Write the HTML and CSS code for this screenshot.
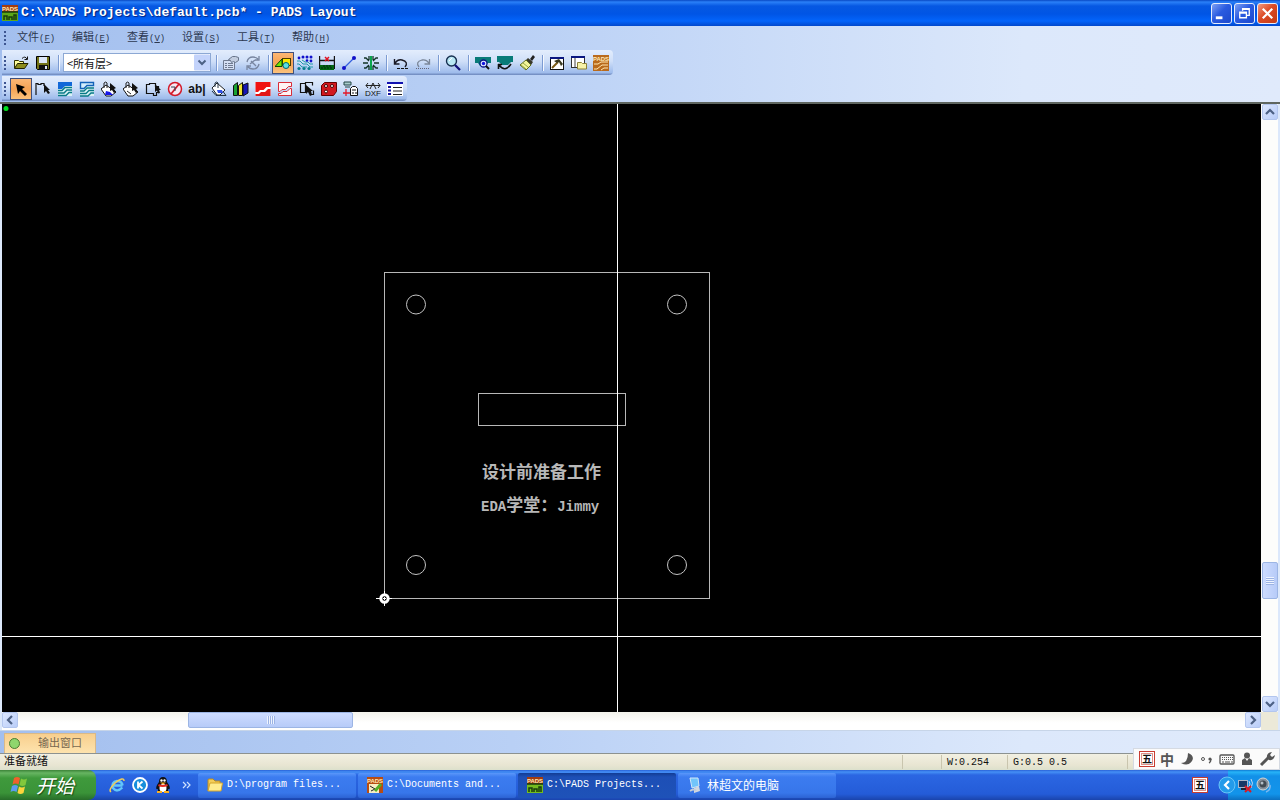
FILE: index.html
```html
<!DOCTYPE html>
<html lang="zh-CN">
<head>
<meta charset="utf-8">
<title>PADS Layout</title>
<link rel="stylesheet" href="styles.css">
</head>
<body>
<header class="titlebar">
  <svg class="icon" viewBox="0 0 16 16"><rect width="16" height="16" fill="#a33c10"/><rect y="7" width="16" height="9" fill="#5ca818"/><path d="M0 7h16M2 15v-4h3v4M7 15v-3h3v3M12 15v-5h2v5" stroke="#173d0c" stroke-width="1.500" fill="none"/><text class="logo-text" x="8" y="6">PADS</text></svg>
  <h1 class="caption">C:\PADS Projects\default.pcb* - PADS Layout</h1>
  <div class="window-buttons">
    <button class="win" aria-label="最小化"><svg viewBox="0 0 20 20"><rect x="4" y="13" width="7" height="3" fill="#fff"/></svg></button>
    <button class="win" aria-label="还原"><svg viewBox="0 0 20 20"><path d="M8 7V5h7v7h-3M8 5.500h7" fill="none" stroke="#fff" stroke-width="1.400"/><path d="M5 8.500h7v6H5zM5 9.500h7" fill="none" stroke="#fff" stroke-width="1.400"/></svg></button>
    <button class="win win-close" aria-label="关闭"><svg viewBox="0 0 20 20"><path d="M5 5l10 10M15 5L5 15" stroke="#fff" stroke-width="2.300"/></svg></button>
  </div>
</header>

<div class="chrome">
  <nav class="menubar">
    <span class="grip"></span>
    <button class="menu">文件<span class="key">(<u>F</u>)</span></button>
    <button class="menu">编辑<span class="key">(<u>E</u>)</span></button>
    <button class="menu">查看<span class="key">(<u>V</u>)</span></button>
    <button class="menu">设置<span class="key">(<u>S</u>)</span></button>
    <button class="menu">工具<span class="key">(<u>T</u>)</span></button>
    <button class="menu">帮助<span class="key">(<u>H</u>)</span></button>
  </nav>

  <div class="toolbar" role="toolbar" aria-label="标准">
    <span class="grip"></span>
    <button class="tool" aria-label="打开"><svg class="icon" viewBox="0 0 16 16"><path d="M1.500 13V5.500h4l1 1h4v2" fill="#ffff9c" stroke="#333300"/><path d="M1.500 13.500l3-5h10.500l-3.500 5z" fill="#8c8c1c" stroke="#222200"/><path d="M9 3.500q3-3 5 .5M14.500 1.500v3h-3" fill="none" stroke="#111"/></svg></button>
    <button class="tool" aria-label="保存"><svg class="icon" viewBox="0 0 16 16"><path d="M1.500 1.500h13v13h-12l-1-1z" fill="#737318" stroke="#000"/><rect x="4" y="2" width="8" height="6" fill="#dce6f8"/><rect x="4" y="10" width="9" height="5" fill="#111"/><rect x="10" y="11" width="2" height="3" fill="#dce6f8"/></svg></button>
    <span class="sep"></span>
    <label class="layer"><select class="layer-select" aria-label="层"><option>&lt;所有层&gt;</option></select><svg class="layer-arrow" viewBox="0 0 16 16"><rect width="16" height="16" rx="1" fill="#c3d3fb"/><path d="M4.500 6L8 9.500 11.500 6" fill="none" stroke="#4d6185" stroke-width="2"/></svg></label>
    <span class="sep"></span>
    <button class="tool" aria-label="特性"><svg class="icon" viewBox="0 0 16 16"><path d="M.5 5.500h11v9H.5z" fill="#d5e0f4" stroke="#707b91"/><path d="M2 8.500h2M5 8.500h5M2 10.500h2M5 10.500h5M2 12.500h2M5 12.500h5" stroke="#707b91"/><path d="M5.500 4.500l4-3h3l3 1v3l-3 2-2-1-2 1-1-2z" fill="#c2cde0" stroke="#68758b"/></svg></button>
    <button class="tool" aria-label="循环"><svg class="icon" viewBox="0 0 16 16"><path d="M2 7q1-5 6-5 3 0 5 2M14 1v4h-4M14 9q-1 5-6 5-3 0-5-2M2 15v-4h4M6 6l5 5M5 9l5-4" fill="none" stroke="#7885a0" stroke-width="1.300"/></svg></button>
    <span class="sep"></span>
    <button class="tool is-active" aria-label="绘图"><svg class="icon" viewBox="0 0 16 16"><rect x="7.500" y="3.500" width="8" height="7" fill="#ffe600" stroke="#4d3c00"/><path d="M0 11.500L7 4v7.500z" fill="#6fe800" stroke="#064800"/><circle cx="11" cy="10.500" r="3" fill="#5ce0e6" stroke="#006a70"/></svg></button>
    <button class="tool" aria-label="设计"><svg class="icon" viewBox="0 0 16 16"><path d="M0 6h3l3 3h4l3 3h3M0 9h2l3 3h5M5 5l3 2h3l2 2h3" fill="none" stroke="#209aaa"/><g fill="#1010cc"><circle cx="2" cy="3" r="1.400"/><circle cx="6" cy="2" r="1.500"/><circle cx="10" cy="2" r="1.500"/><circle cx="14" cy="2" r="1.500"/><circle cx="10" cy="5.500" r="1.300"/><circle cx="14" cy="6" r="1.400"/></g><g fill="#087c8c"><circle cx="2" cy="13.500" r="1.600"/><circle cx="7" cy="13.500" r="1.600"/><circle cx="12" cy="13.500" r="1.600"/></g></svg></button>
    <button class="tool" aria-label="尺寸"><svg class="icon" viewBox="0 0 16 16"><path d="M.5 1v13M15.500 1v13M1 5.500h14" stroke="#111" stroke-width="1.400"/><path d="M6 2l4 4M10 2L6 6" stroke="#e01020" stroke-width="1.500"/><rect x="1" y="10" width="14" height="5" fill="#061"/><path d="M2 13h12M4 11h8" stroke="#021" stroke-dasharray="2 1"/></svg></button>
    <button class="tool" aria-label="布线"><svg class="icon" viewBox="0 0 16 16"><path d="M3 13L13 3" stroke="#3560df" stroke-width="1.300"/><circle cx="3" cy="13" r="2" fill="#1010c8"/><circle cx="13" cy="3" r="2" fill="#1010c8"/></svg></button>
    <button class="tool" aria-label="ECO"><svg class="icon" viewBox="0 0 16 16"><path d="M1 3h2l3 3M0 8h5M1 13h2l3-3M15 3h-2l-3 3M16 8h-5M15 13h-2l-3-3M6 1v4M10 1v4M6 11v4M10 11v4" fill="none" stroke="#123326" stroke-width="1.300"/><path d="M8 1v14" stroke="#09a54d" stroke-width="2"/></svg></button>
    <span class="sep"></span>
    <button class="tool" aria-label="撤消"><svg class="icon" viewBox="0 0 16 16"><path d="M1.500 4v5h5M2 8q3-4 7-3 7 2 3 7" fill="none" stroke="#191925" stroke-width="1.400"/><path d="M4 13.500h11" stroke="#111" stroke-dasharray="3 1"/></svg></button>
    <button class="tool" aria-label="重做"><svg class="icon" viewBox="0 0 16 16"><path d="M14.500 4v5h-5M14 8q-3-4-7-3-7 2-3 7" fill="none" stroke="#7b8799" stroke-width="1.300"/><path d="M1 13.500h14" stroke="#667" stroke-dasharray="1 1"/></svg></button>
    <span class="sep"></span>
    <button class="tool" aria-label="缩放"><svg class="icon" viewBox="0 0 16 16"><circle cx="6.500" cy="6" r="5" fill="#b9e8f5" stroke="#173050" stroke-width="1.400"/><path d="M10 10l5 5" stroke="#10107a" stroke-width="2.300"/><path d="M4 6l3-3" stroke="#fff"/></svg></button>
    <span class="sep"></span>
    <button class="tool" aria-label="板"><svg class="icon" viewBox="0 0 16 16"><path d="M0 2h16v6h-3l-3 3H5L3 8H0z" fill="#087b78"/><circle cx="8.500" cy="8.500" r="3.500" fill="#e5eeff" stroke="#0b1688" stroke-width="1.300"/><circle cx="8.500" cy="8.500" r="1.700" fill="#1414df"/><path d="M11 11l3 3" stroke="#111" stroke-width="2"/></svg></button>
    <button class="tool" aria-label="重画"><svg class="icon" viewBox="0 0 16 16"><path d="M0 1h16v6h-2l-3 3H5L2 7H0z" fill="#087b78"/><path d="M1.500 9v5M1 9.500h4M2 10q6 8 12-1" fill="none" stroke="#111" stroke-width="1.600"/></svg></button>
    <button class="tool" aria-label="刷新"><svg class="icon" viewBox="0 0 16 16"><path d="M11 4l3-4 2 2-3 4z" fill="#222"/><path d="M7 5l2-2 5 4-2 3z" fill="#38382a"/><path d="M7 5l5 5-5 5-6-5z" fill="#f2f49a" stroke="#607020"/><path d="M4 8l5 4M2 10l5 4" stroke="#95a846"/></svg></button>
    <span class="sep"></span>
    <button class="tool" aria-label="输出窗口"><svg class="icon" viewBox="0 0 16 16"><rect x="1.500" y="2.500" width="13" height="12" fill="#fff" stroke="#111"/><path d="M1 3h14" stroke="#0a1680" stroke-width="2"/><path d="M3 13l6-6" stroke="#7b5b16" stroke-width="2"/><path d="M5 6l5-2 4 5-2 2-2-4-2 1z" fill="#383820"/></svg></button>
    <button class="tool" aria-label="项目浏览器"><svg class="icon" viewBox="0 0 16 16"><rect x=".5" y="1.500" width="13" height="11" fill="#fff" stroke="#333"/><path d="M0 2h14" stroke="#0a1680" stroke-width="2"/><path d="M4 3v9" stroke="#444"/><path d="M6.500 14V7.500h4l1 1h4V14z" fill="#f7f2a8" stroke="#8d8238"/></svg></button>
    <button class="tool" aria-label="PADS"><svg class="icon" viewBox="0 0 16 16"><rect width="16" height="16" fill="#b96a1c"/><text class="logo-text" x="8" y="6">PADS</text><path d="M1 9h4l3-2h7M1 14h3l5-4h6M8 15l3-2h4" fill="none" stroke="#ffe7b0"/></svg></button>
  </div>

  <div class="toolbar" role="toolbar" aria-label="绘图">
    <span class="grip"></span>
    <button class="tool is-active" aria-label="选择"><svg class="icon" viewBox="0 0 16 16"><path d="M3 3l9 3-3 2 5 5-2 2-5-5-2 3z" fill="#000"/></svg></button>
    <button class="tool" aria-label="绘图线"><svg class="icon" viewBox="0 0 16 16"><path d="M1 14V2.500h2v1h3v-1h3V5" fill="none" stroke="#111" stroke-width="1.200"/><path d="M9 3l6 6h-2l2 3-2 1-2-3-2 2z" fill="#111"/></svg></button>
    <button class="tool" aria-label="铜箔"><svg class="icon" viewBox="0 0 16 16"><rect x="1" y="1" width="14" height="14" fill="#d9f3f6"/><path d="M1 1h14v4H8L5 8H1z" fill="#1268d8"/><path d="M1 9.500h4l3-3h7M1 12h6l3-3h5M1 14.500h8l3-3h3" fill="none" stroke="#087a86" stroke-width="1.400"/></svg></button>
    <button class="tool" aria-label="铜箔挖空"><svg class="icon" viewBox="0 0 16 16"><rect x="1" y="1" width="14" height="14" fill="#d9f3f6"/><path d="M1.500 1.500h13v3H8l-3 3H1.500z" fill="#d3eefc" stroke="#1262b8" stroke-width="1.400"/><path d="M1 10h4l3-3h7M1 12.500h6l3-3h5M1 15h8l3-3h3" fill="none" stroke="#087a86" stroke-width="1.300"/></svg></button>
    <button class="tool" aria-label="灌铜"><svg class="icon" viewBox="0 0 16 16"><path d="M0 8l5-4 10 7-5 4H5z" fill="#fff" stroke="#111"/><path d="M5 10l4 1 3 3H4z" fill="#1717e8"/><path d="M3 7V2q2-2 3 0v5" fill="none" stroke="#222"/><path d="M9 2l6 5-2 1 2 3-2 1-2-3-2 1z" fill="#111"/></svg></button>
    <button class="tool" aria-label="灌铜挖空"><svg class="icon" viewBox="0 0 16 16"><path d="M0 8l5-4 10 7-5 4H5z" fill="#fff" stroke="#111"/><path d="M3 7V2q2-2 3 0v5M4 10l4 3" fill="none" stroke="#222"/><path d="M9 2l6 5-2 1 2 3-2 1-2-3-2 1z" fill="#111"/></svg></button>
    <button class="tool" aria-label="板框"><svg class="icon" viewBox="0 0 16 16"><path d="M1.500 3.500h3v-1h6v3h3v6h-2v3h-3v-2h-7z" fill="none" stroke="#111" stroke-width="1.200"/><path d="M10 3l6 6h-2l1 3-2 .5-1-3-2 1.500z" fill="#111"/></svg></button>
    <button class="tool" aria-label="禁止区"><svg class="icon" viewBox="0 0 16 16"><circle cx="8" cy="8" r="6.500" fill="#f7e9f4" stroke="#d31a2a" stroke-width="1.500"/><path d="M4 13l8-10" stroke="#d31a2a" stroke-width="1.800"/><path d="M4 6h4v4" fill="none" stroke="#345"/></svg></button>
    <button class="tool tool-text" aria-label="文本">ab|</button>
    <button class="tool" aria-label="填充"><svg class="icon" viewBox="0 0 16 16"><path d="M1 7l5-5 8 7-5 5H6z" fill="#fff" stroke="#222"/><path d="M6 9h5l1 3H7z" fill="#3050e8"/><path d="M4 6V2q2-2 3 0v5M1 10l4 4.500h10l-3-4" fill="none" stroke="#234"/></svg></button>
    <button class="tool" aria-label="从库"><svg class="icon" viewBox="0 0 16 16"><path d="M.5 4.500l4-3v13h-4z" fill="#19a332" stroke="#111"/><path d="M5.500 4.500l4-3v13h-4z" fill="#f0e330" stroke="#111"/><path d="M10 4l5-2v10l-5 3z" fill="#1616b8" stroke="#111"/></svg></button>
    <button class="tool" aria-label="平面区域"><svg class="icon" viewBox="0 0 16 16"><rect x=".5" y="1" width="15" height="14" fill="#fff"/><path d="M.5 1h15v5h-4l-3 3H5l-2 2H.5z" fill="#f01212"/><path d="M.5 13H4l2-2h4l3-3h2.500v7H.5z" fill="#e31515"/></svg></button>
    <button class="tool" aria-label="平面挖空"><svg class="icon" viewBox="0 0 16 16"><path d="M1.500 1.500h13v4h-3l-3 3H5l-2 2H1.500zM1.500 14.500v-2H4l2-2h4l3-3h1.500v7z" fill="#fff4f4" stroke="#d92d38"/></svg></button>
    <button class="tool" aria-label="自动平面"><svg class="icon" viewBox="0 0 16 16"><path d="M1.500 2.500h5v9h-5zM6.500 4.500v-3h7v3M11 13.500h3.500v-4" fill="none" stroke="#111" stroke-width="1.200"/><path d="M7 4l7 6h-2l1 4-2 1-2-4-2 2z" fill="#111"/></svg></button>
    <button class="tool" aria-label="过孔"><svg class="icon" viewBox="0 0 16 16"><path d="M.5 4.500l3-3h12v9l-3 4H.5z" fill="#d21820" stroke="#600"/><g fill="#fff" stroke="#400"><circle cx="5" cy="5" r="1.500"/><circle cx="11" cy="5" r="1.500"/><circle cx="5" cy="10.500" r="1.500"/></g></svg></button>
    <button class="tool" aria-label="尺寸标注"><svg class="icon" viewBox="0 0 16 16"><path d="M1 1h7v3H1zM2 6h5" fill="#a9cccc" stroke="#244"/><path d="M3 8v7M0 12h7" stroke="#e21828" stroke-width="1.300"/><path d="M7.500 14.500v-7l2-2h3l2 2v7z" fill="#fff" stroke="#111"/><path d="M9 12h2M12 12h2M9 9h4" stroke="#111"/></svg></button>
    <button class="tool" aria-label="导入 DXF"><svg class="icon" viewBox="0 0 16 16"><path d="M1 4.500h14M3 2L1 4.500 3 7M13 2l2 2.500L13 7M5 8l3-6 3 6" fill="none" stroke="#222"/><text class="dxf-text" x="8" y="15">DXF</text></svg></button>
    <button class="tool" aria-label="选项"><svg class="icon" viewBox="0 0 16 16"><rect x="0" y="1" width="16" height="14" fill="#fff"/><path d="M0 2h16" stroke="#1212b0" stroke-width="2"/><path d="M1 6h3M1 9.500h3M1 13h3" stroke="#12129a" stroke-width="2"/><path d="M6 6.500h9M6 10h9M6 13.500h9" stroke="#222"/></svg></button>
  </div>
</div>

<main class="workspace">
  <div class="board">
    <svg class="drawing" width="100%" height="100%">
      <circle cx="4" cy="4.500" r="2.500" fill="#00e020"/>
      <g fill="none" stroke="#b8b8b8" shape-rendering="crispEdges">
        <rect x="382.500" y="168.500" width="325" height="326"/>
        <rect x="476.500" y="289.500" width="147" height="32"/>
      </g>
      <g fill="none" stroke="#c4c4c4">
        <circle cx="414" cy="200.500" r="9.500"/><circle cx="675" cy="200.500" r="9.500"/>
        <circle cx="414" cy="461" r="9.500"/><circle cx="675" cy="461" r="9.500"/>
      </g>
      <line x1="615.500" x2="615.500" y1="0" y2="100%" stroke="#fff" shape-rendering="crispEdges"/>
      <line x1="0" x2="100%" y1="532.500" y2="532.500" stroke="#fff" shape-rendering="crispEdges"/>
      <path d="M374 494.500h16M382.500 487v15" stroke="#fff"/>
      <circle cx="382.500" cy="494.500" r="3.700" fill="#000" stroke="#fff" stroke-width="3"/>
      <path d="M381 494.500h3M382.500 493v3" stroke="#fff"/>
      <text class="board-text" x="480" y="374">设计前准备工作</text>
      <text class="board-text" x="479" y="407"><tspan class="board-latin">EDA</tspan>学堂：<tspan class="board-latin">Jimmy</tspan></text>
    </svg>
  </div>
  <div class="scroll scroll-y">
    <button class="arrow" aria-label="向上"><svg viewBox="0 0 14 14"><path d="M3 9l4-4 4 4" fill="none" stroke="#4d6185" stroke-width="2.200"/></svg></button>
    <span class="space-before"></span><span class="thumb"></span><span class="space-after"></span>
    <button class="arrow" aria-label="向下"><svg viewBox="0 0 14 14"><path d="M3 5l4 4 4-4" fill="none" stroke="#4d6185" stroke-width="2.200"/></svg></button>
  </div>
  <div class="scroll scroll-x">
    <button class="arrow" aria-label="向左"><svg viewBox="0 0 14 14"><path d="M9 3L5 7l4 4" fill="none" stroke="#4d6185" stroke-width="2.200"/></svg></button>
    <span class="space-before"></span><span class="thumb"></span><span class="space-after"></span>
    <button class="arrow" aria-label="向右"><svg viewBox="0 0 14 14"><path d="M5 3l4 4-4 4" fill="none" stroke="#4d6185" stroke-width="2.200"/></svg></button>
  </div>
  <div class="corner"></div>
</main>

<div class="dock"><button class="dock-tab"><span class="dot"></span>输出窗口</button></div>

<div class="statusbar">
  <span class="ready">准备就绪</span>
  <span class="cell cell-blank"></span>
  <span class="cell cell-w">W:0.254</span>
  <span class="cell cell-g">G:0.5 0.5</span>
  <span class="cell cell-end"></span>
  <div class="ime">
    <svg class="icon" viewBox="0 0 16 16"><rect x=".5" y=".5" width="15" height="15" fill="#fff" stroke="#c83c32"/><rect x="2.500" y="2.500" width="11" height="11" fill="none" stroke="#e09088"/><text class="wu-text" x="8" y="12">五</text></svg>
    <span class="ime-lang">中</span>
    <svg class="icon" viewBox="0 0 16 16"><path d="M9 2q7 3 4 8-4 6-11 2 7 0 7-10z" fill="#555"/></svg>
    <svg class="icon" viewBox="0 0 16 16"><circle cx="4" cy="8" r="1.500" fill="none" stroke="#555"/><circle cx="11" cy="8" r="1.600" fill="#555"/><path d="M12 8q0 3-2 4" fill="none" stroke="#555" stroke-width="1.300"/></svg>
    <svg class="icon" viewBox="0 0 16 16"><rect x="1" y="4" width="14" height="9" rx="1" fill="#f8f8f8" stroke="#555" stroke-width="1.300"/><path d="M3 6.500h11M3 8.500h11" stroke="#555" stroke-dasharray="1 1"/><path d="M3 11h2M6 11h5M12 11h2" stroke="#555"/></svg>
    <svg class="icon" viewBox="0 0 16 16"><circle cx="8" cy="4.500" r="3" fill="#555"/><path d="M3 14V9l3-2 2 3 2-3 3 2v5z" fill="#555"/></svg>
    <svg class="icon" viewBox="0 0 16 16"><path d="M2 14l7-7" stroke="#555" stroke-width="3"/><path d="M8 7q-1-5 5-6l-2 3 2 2 3-2q-1 6-6 5z" fill="#555"/></svg>
  </div>
</div>

<footer class="taskbar">
  <button class="start"><svg class="flag" viewBox="0 0 20 18"><path d="M4 2q3-2 6 0L8.500 8.500q-3-2-6 0z" fill="#f0602c"/><path d="M11 2.500q3 2 6 0L15.500 9q-3 2-6 0z" fill="#82c83c"/><path d="M2 10q3-2 6 0l-1.500 6q-3-2-6 0z" fill="#5c9cf0"/><path d="M9 10.500q3 2 6 0L13.500 17q-3 2-6 0z" fill="#fcd43c"/></svg>开始</button>
  <div class="quick">
    <button class="launch" aria-label="Internet Explorer"><svg class="icon" viewBox="0 0 16 16"><path d="M13.500 8.500H5M13.300 10.500Q8 16 4 11 2 5 8 4q5 0 5.500 4.500" fill="none" stroke="#62c6fa" stroke-width="2.500"/><path d="M2 15Q-1 13 6 6 15-1 15 4" fill="none" stroke="#f2ce58" stroke-width="1.500"/></svg></button>
    <button class="launch" aria-label="K"><svg class="icon" viewBox="0 0 16 16"><circle cx="8" cy="8" r="7" fill="#168fdc" stroke="#fff" stroke-width="1.800"/><path d="M6 4.500v7M10.500 4.500L6.500 8l4 3.500" fill="none" stroke="#fff" stroke-width="1.800"/></svg></button>
    <button class="launch" aria-label="QQ"><svg class="icon" viewBox="0 0 16 16"><path d="M3 12Q0 13 2 8l2-3q0-5 4-5t4 5l2 3q2 5-1 4v2H3z" fill="#111"/><ellipse cx="8" cy="11" rx="3.500" ry="4" fill="#fff"/><circle cx="6.500" cy="3.500" r="1.200" fill="#fff"/><circle cx="9.500" cy="3.500" r="1.200" fill="#fff"/><path d="M5 5.500h6l-3 2z" fill="#fbb020"/><path d="M3.500 8q4 2 9 0" fill="none" stroke="#e42a20" stroke-width="2"/><path d="M2 15h5M9 15h5" stroke="#fbb020" stroke-width="2"/></svg></button>
    <button class="more" aria-label="更多"><svg viewBox="0 0 10 8"><path d="M1 1l3 3-3 3M5 1l3 3-3 3" fill="none" stroke="#cfe2ff" stroke-width="1.200"/></svg></button>
  </div>
  <div class="tasks">
    <button class="task"><svg class="icon" viewBox="0 0 16 16"><path d="M1 14V3q0-1 1-1h4l2 2h5v2" fill="#f4cd57" stroke="#b98a21"/><path d="M1 14l2-8h12.500L14 14z" fill="#ffec8e" stroke="#d3a42c"/></svg><span>D:\program files...</span></button>
    <button class="task"><svg class="icon" viewBox="0 0 16 16"><rect width="16" height="16" fill="#b84c12"/><rect x="2" y="7" width="10" height="9" fill="#f7eec5"/><path d="M3 9l5 3-4 2" fill="none" stroke="#222"/><path d="M8 14l6-7" stroke="#55ae27" stroke-width="3"/><text class="logo-text" x="8" y="6">PADS</text></svg><span>C:\Documents and...</span></button>
    <button class="task is-current"><svg class="icon" viewBox="0 0 16 16"><rect width="16" height="16" fill="#a33c10"/><rect y="7" width="16" height="9" fill="#74bc20"/><path d="M0 7h16M2 15v-4h3v4M7 15v-3h3v3M12 15v-5h2v5" stroke="#173d0c" stroke-width="1.500" fill="none"/><text class="logo-text" x="8" y="6">PADS</text></svg><span>C:\PADS Projects...</span></button>
    <button class="task task-cjk"><svg class="icon" viewBox="0 0 16 16"><path d="M3 1h8l1 8-7 2z" fill="#72c5fa" stroke="#d3e8f8"/><path d="M7 11l5-2 1 5-6 2z" fill="#d3d8df"/><path d="M3 14q4-3 6 0" fill="none" stroke="#c3cdda" stroke-width="2"/></svg><span>林超文的电脑</span></button>
  </div>
  <div class="language"><svg class="icon" viewBox="0 0 16 16"><rect x=".5" y=".5" width="15" height="15" fill="#fff" stroke="#c83c32"/><rect x="2.500" y="2.500" width="11" height="11" fill="none" stroke="#e09088"/><text class="wu-text" x="8" y="12">五</text></svg></div>
  <div class="tray">
    <button class="expand" aria-label="显示隐藏的图标"><svg viewBox="0 0 18 18"><circle cx="9" cy="9" r="8" fill="#239bea" stroke="#68c5f8"/><path d="M11 5L7 9l4 4" fill="none" stroke="#fff" stroke-width="2.200"/></svg></button>
    <svg class="icon" viewBox="0 0 16 16"><rect x=".5" y="3.500" width="9" height="7" fill="#173866" stroke="#a9b6ca"/><path d="M3 12h5" stroke="#223" stroke-width="2"/><path d="M11 4q2 3 0 6M13 2q3 4 0 9" fill="none" stroke="#c3d9f4"/><path d="M7 9l6 6M13 9l-6 6" stroke="#d91824" stroke-width="2"/></svg>
    <svg class="icon" viewBox="0 0 16 16"><circle cx="7" cy="7" r="6" fill="#87919c" stroke="#d1d6d9"/><circle cx="7" cy="7" r="3.500" fill="#424b54"/><circle cx="6" cy="6" r="1.500" fill="#b5bfc8"/><path d="M14 8q1 5-4 7" fill="none" stroke="#7ab8f0" stroke-width="1.500"/></svg>
  </div>
</footer>
</body>
</html>
```
FILE: styles.css
```css
* { box-sizing: border-box; }
body {
  margin: 0;
  min-height: 100vh;
  display: flex;
  flex-direction: column;
  background: #dce8fb;
  font: 11px/16px "Liberation Mono", "Noto Sans CJK SC", monospace;
  color: #111;
}
button { border: 0; padding: 0; margin: 0; background: none; font: inherit; color: inherit; }
svg { display: block; flex: none; }
.icon { width: 16px; height: 16px; }
.logo-text { font: bold 6px "Liberation Sans", sans-serif; fill: #ffe9b8; text-anchor: middle; }
.dxf-text { font: 8px "Liberation Sans", sans-serif; fill: #111; text-anchor: middle; }
.wu-text { font: bold 10px "Noto Sans CJK SC", sans-serif; fill: #111; text-anchor: middle; }

.titlebar {
  height: 26px;
  display: flex;
  align-items: center;
  padding: 0 2px;
  gap: 3px;
  background: linear-gradient(#0849c4 0, #2a80f8 2px, #0658e2 6px, #0055e5 14px, #0364fb 21px, #0248cc 26px);
}
.caption {
  flex: 1;
  margin: 0;
  font: bold 13px/20px "Liberation Mono", monospace;
  color: #fff;
  text-shadow: 1px 1px 1px #06247c;
}
.window-buttons { display: flex; gap: 2px; }
.win {
  width: 21px;
  height: 21px;
  border: 1px solid #e6edfc;
  border-radius: 3px;
  background: linear-gradient(135deg, #7da0f4, #2a5be0 45%, #1c48cc);
}
.win-close { background: linear-gradient(135deg, #f09a80, #dc4a24 45%, #c23a14); }

.chrome {
  background: linear-gradient(90deg, #a3bfee, #b9d0f5 40%, #dce8fb 80%, #e0eafb);
  padding: 0 0 0 2px;
  border-bottom: 2px solid #5f6660;
}
.menubar { display: flex; align-items: center; height: 24px; }
.grip {
  width: 2px;
  height: 14px;
  margin: 0 3px 0 2px;
  background: repeating-linear-gradient(#3d5590 0 2px, transparent 2px 4px);
}
.menu { width: 55px; padding-left: 8px; text-align: left; white-space: nowrap; color: #2c3850; }
.key { font-size: 9px; }
.toolbar {
  display: flex;
  align-items: center;
  width: fit-content;
  height: 25px;
  margin-bottom: 1px;
  padding-right: 1px;
  border-radius: 0 4px 4px 0;
  background: linear-gradient(#e3edfd, #cfdff8 45%, #9fbcec 90%, #6b86bb);
}
.toolbar .grip { margin-right: 4px; }
.tool { width: 22px; height: 22px; display: grid; place-items: center; }
.tool.is-active { border: 1px solid #40507c; background: linear-gradient(#fcb774, #f5a355 50%, #fbc27c); }
.tool-text { font: bold 12px "Liberation Sans", sans-serif; }
.sep { width: 1px; height: 16px; margin: 0 3px 0 4px; background: #7c9bd2; box-shadow: 1px 0 #f4f8ff; }
.layer { position: relative; width: 148px; height: 19px; margin: 0 1px; }
.layer-select {
  width: 100%;
  height: 100%;
  padding: 0 20px 0 3px;
  border: 1px solid #8ca8d4;
  border-radius: 0;
  background: #fff;
  appearance: none;
  font: 11px/16px "Noto Sans CJK SC", sans-serif;
  color: #111;
}
.layer-arrow { position: absolute; right: 1px; top: 1px; width: 16px; height: 17px; pointer-events: none; }

.workspace {
  flex: 1;
  display: grid;
  grid-template-columns: 1fr 17px;
  grid-template-rows: 1fr 18px;
  padding: 0 2px;
  border-bottom: 1px solid #c7d5e8;
}
.board { background: #000; min-height: 500px; overflow: hidden; }
.drawing { display: block; }
.board-text { font: bold 17px "Noto Sans CJK SC", sans-serif; fill: #b8b8b8; }
.board-latin { font: bold 14px "Liberation Mono", monospace; }
.scroll { display: flex; background: #fdfdfb; }
.scroll-y { flex-direction: column; }
.scroll-x { background: linear-gradient(#f3f3ec, #fff 60%); }
.arrow {
  width: 16px;
  height: 16px;
  border: 1px solid #b3c6ee;
  border-radius: 2px;
  background: linear-gradient(135deg, #dce7ff, #b9cdf8);
}
.thumb { border: 1px solid #9cb5e4; border-radius: 2px; display: grid; place-items: center; background: #c5d5fb; }
.thumb::after { content: ""; width: 8px; height: 8px; }
.scroll-y .arrow, .scroll-y .thumb { margin-left: 1px; }
.scroll-y .thumb { height: 37px; background: linear-gradient(90deg, #cddcff, #b7cbf8); }
.scroll-y .thumb::after { background: repeating-linear-gradient(#eef4ff 0 1px, #9cb3e4 1px 2px); }
.scroll-y .space-before { flex: 442; }
.scroll-y .space-after { flex: 97; }
.scroll-x .thumb { width: 165px; height: 16px; background: linear-gradient(#cddcff, #b7cbf8); }
.scroll-x .thumb::after { background: repeating-linear-gradient(90deg, #eef4ff 0 1px, #9cb3e4 1px 2px); }
.scroll-x .space-before { flex: 170; }
.scroll-x .space-after { flex: 892; }
.corner { background: #ece9d8; }

.dock {
  display: flex;
  align-items: flex-end;
  height: 22px;
  padding-left: 4px;
  background: linear-gradient(90deg, #a3bfee, #b9d0f5 40%, #dce8fb 80%, #e0eafb);
}
.dock-tab {
  display: flex;
  align-items: center;
  width: 92px;
  height: 20px;
  padding-left: 4px;
  gap: 18px;
  border: 1px solid #d9b988;
  border-bottom: 0;
  background: linear-gradient(#f8cf8d, #fde3ae);
  color: #776850;
  white-space: nowrap;
}
.dot { width: 11px; height: 11px; border: 1px solid #4c7c33; border-radius: 50%; background: #8fd66d; }

.statusbar {
  position: relative;
  display: flex;
  align-items: center;
  height: 17px;
  border-top: 1px solid #8c9290;
  background: linear-gradient(#f2f0e2, #e8e5d2 70%, #dce0cc);
}
.ready { flex: 1; padding-left: 4px; }
.cell { height: 14px; border-left: 1px solid #c9c5ae; padding-left: 5px; font-size: 10px; white-space: nowrap; }
.cell-blank { width: 39px; }
.cell-w { width: 66px; }
.cell-g { width: 120px; }
.cell-end { width: 153px; }
.ime {
  position: absolute;
  right: 0;
  bottom: 0;
  display: flex;
  align-items: center;
  gap: 4px;
  width: 147px;
  height: 22px;
  padding-left: 5px;
  border: 1px solid #d5dae2;
  background: #fbfbfb;
}
.ime-lang { width: 16px; text-align: center; font: bold 14px/20px "Noto Sans CJK SC", sans-serif; color: #555; }

.taskbar {
  display: flex;
  align-items: center;
  height: 30px;
  background: linear-gradient(#2a62d8 0, #4590f6 2px, #2b66e2 5px, #245cd8 24px, #1a44ac);
}
.start {
  display: flex;
  align-items: center;
  gap: 6px;
  width: 96px;
  height: 100%;
  padding-left: 10px;
  border-radius: 0 8px 8px 0;
  background: linear-gradient(#3c8338 0, #67b562 3px, #3f9a3c 8px, #3a9338 23px, #276c29);
  font: italic 19px/26px "Noto Sans CJK SC", sans-serif;
  color: #fff;
  text-shadow: 1px 1px 1px #174a16;
  white-space: nowrap;
}
.flag { width: 20px; height: 18px; }
.quick { display: flex; align-items: center; width: 102px; padding-left: 13px; gap: 7px; }
.more { width: 10px; height: 20px; margin-left: 4px; }
.more svg { width: 10px; height: 8px; }
.tasks { flex: 1; display: flex; gap: 2px; }
.task {
  flex: 0 1 158px;
  display: flex;
  align-items: center;
  gap: 4px;
  height: 25px;
  padding-left: 9px;
  border-radius: 2px;
  background: linear-gradient(#5a97fa, #3c7cf0 4px, #3776ea 20px, #2c62d2);
  font-size: 10px;
  color: #fff;
  white-space: nowrap;
}
.task.is-current { background: linear-gradient(#123c94, #1d4fb6 4px, #1e52b8); }
.task-cjk { font: 12px/18px "Noto Sans CJK SC", sans-serif; }
.language { width: 36px; }
.tray {
  display: flex;
  align-items: center;
  gap: 2px;
  width: 52px;
  height: 100%;
  background: linear-gradient(#0f7ad4 0, #27b4f8 2px, #1290e8 6px, #1294ea 24px, #0c70c0);
}
.expand { flex: none; width: 18px; height: 18px; margin-left: -10px; }
```
